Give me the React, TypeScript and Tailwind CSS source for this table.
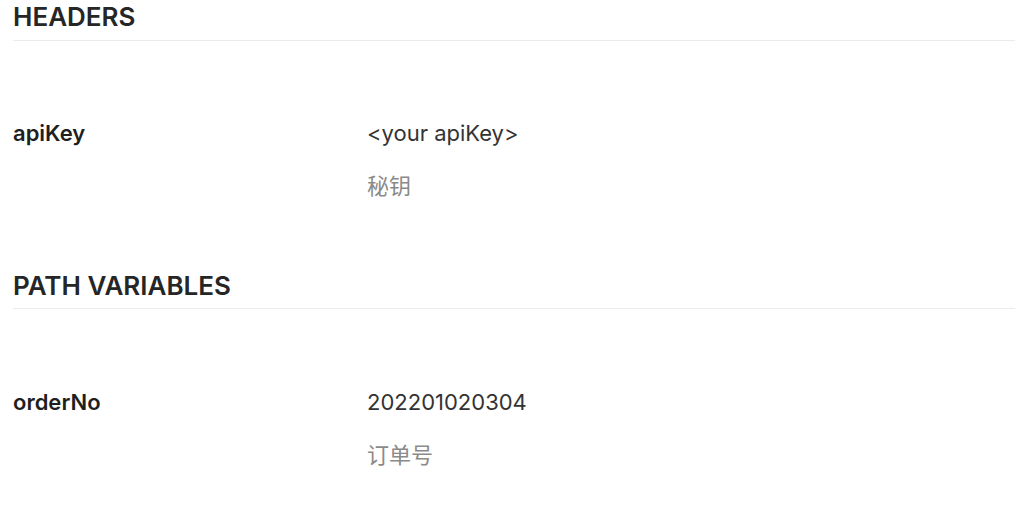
const sections = [
  {
    title: "HEADERS",
    rows: [{ name: "apiKey", value: "<your apiKey>", desc: "秘钥" }],
  },
  {
    title: "PATH VARIABLES",
    rows: [{ name: "orderNo", value: "202201020304", desc: "订单号" }],
  },
];

export default function App() {
  return (
    <div
      className="min-h-[513px] bg-white pl-[13px] pr-[9px] pt-[1px] text-[#2b2b2b]"
      style={{ fontFamily: 'Inter, "Noto Sans CJK SC", sans-serif' }}
    >
      {sections.map((s, i) => (
        <section key={s.title} className={i > 0 ? "mt-[68px]" : ""}>
          <h2
            className={`border-b border-[#ebebeb] text-[26px] font-semibold leading-[32px] text-[#262626] ${
              i > 0 ? "pb-[6px]" : "pb-[7px]"
            }`}
          >
            {s.title}
          </h2>
          {s.rows.map((r) => (
            <div key={r.name} className={`${i > 0 ? "mt-[77px]" : "mt-[76px]"} flex`}>
              <div className="w-[354px] shrink-0 text-[22px] font-semibold leading-[32px] text-[#1f1f1f]">
                {r.name}
              </div>
              <div className="flex flex-col gap-[21px]">
                <div className="text-[22px] leading-[32px] text-[#333333]">{r.value}</div>
                <div className="text-[22px] leading-[32px] text-[#8a8a8a]">{r.desc}</div>
              </div>
            </div>
          ))}
        </section>
      ))}
    </div>
  );
}
